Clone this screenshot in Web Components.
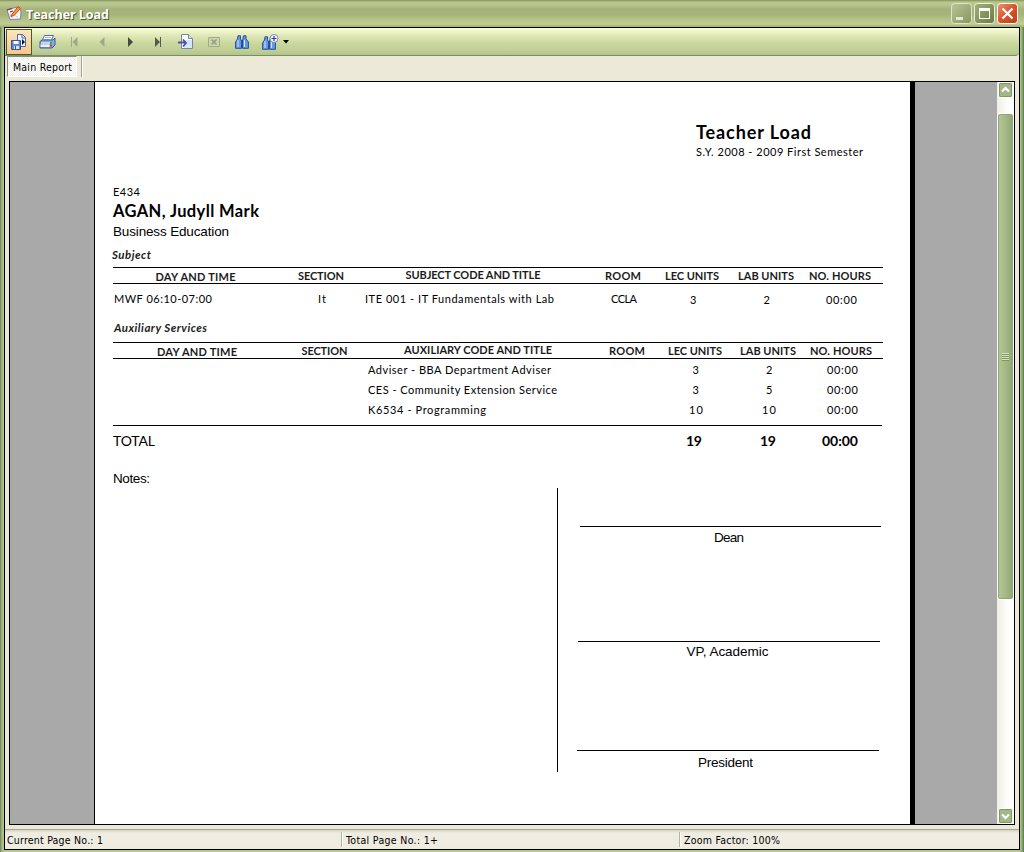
<!DOCTYPE html>
<html lang="en">
<head>
<meta charset="utf-8">
<title>Teacher Load</title>
<style>
html,body{margin:0;height:100%;overflow:hidden}
body{font-family:"Liberation Sans",Arial,sans-serif;color:#000}
</style>
</head>
<body>
<app-window></app-window>
<script>
function define(name, html, init){
  customElements.define(name, class extends HTMLElement{
    connectedCallback(){
      if(this.shadowRoot) return;
      this.attachShadow({mode:'open'}).innerHTML = html;
      if(init) init.call(this);
    }
  });
}

/* Tracks its text so that it fills the width given in "w". */
define('fit-text', `<style>
:host{display:inline-block;white-space:pre;flex:none}
:host([f=c]){font-family:Lato,"Open Sans",sans-serif;font-size:11px;color:#000}
:host([f=b]){font-family:Lato,"Open Sans",sans-serif;font-size:11px;font-weight:700;color:#1c1c1c}
:host([f=i]){font-family:Lato,"Open Sans",sans-serif;font-size:11.5px;font-weight:700;font-style:italic;color:#1c1c1c}
:host([f=t]){font-family:"DejaVu Sans Condensed","DejaVu Sans",sans-serif;font-size:10.5px}
:host([f=a]){font-family:"Liberation Sans",Arial,sans-serif;font-size:13.5px}
</style><span><slot></slot></span>`, function(){
  const w = +this.getAttribute('w'), s = this.shadowRoot.querySelector('span');
  const n = this.textContent.length;
  if(n > 1) s.style.letterSpacing = ((w - s.getBoundingClientRect().width)/(n-1)) + 'px';
  this.style.width = w + 'px';
});

define('title-bar', `<style>
:host{display:flex;height:27px;align-items:center;box-sizing:border-box;padding:0 6px 0 6px;
background:linear-gradient(#7f9257 0,#b9c78f 2px,#b7c48c 5px,#a5b37a 9px,#a7b57b 15px,#b6c489 20px,#bfcc93 24px,#9fae72 27px)}
svg{display:block}
.i{margin:-2px 4px 0 0}
fit-text{font:700 12.5px "Open Sans",sans-serif;color:#fff;text-shadow:1px 1px 0 #4d5930;flex:none;margin-top:2px}
.g{flex:1}
.b{display:flex;gap:2px}
</style>
<svg class="i" width="16" height="16"><path d="M1 5l3 9.500 10.500-.5.5-8-4-4z" fill="#f4f4fb" stroke="#7f82aa"/><path d="M3.500 9l2.500 4M6 9l6 3" stroke="#c4c6df" fill="none"/><path d="M5.500 10L12 1.500l2.500 2L8 10.500l-3 1z" fill="#f59a2c" stroke="#c4481a"/><path d="M1 5l5-1.500M4 7l3-1" stroke="#8a2a18" stroke-width="1.300"/></svg>
<fit-text w="83">Teacher Load</fit-text><span class="g"></span>
<div class="b">
<svg width="21" height="21"><defs><linearGradient id="m1" x2="1" y2="1"><stop stop-color="#b9c597"/><stop offset="1" stop-color="#869660"/></linearGradient></defs><rect x=".5" y=".5" width="20" height="20" rx="3" fill="url(#m1)" stroke="#dfe6c8"/><path d="M5 14h7v3H5z" fill="#e3e9cc"/></svg>
<svg width="21" height="21"><defs><linearGradient id="m2" x2="1" y2="1"><stop stop-color="#a2b17b"/><stop offset="1" stop-color="#6b7c42"/></linearGradient></defs><rect x=".5" y=".5" width="20" height="20" rx="3" fill="url(#m2)" stroke="#edf1dc"/><path d="M5 5h11v11H5zM6 8v7h9V8z" fill="#fff" fill-rule="evenodd"/></svg>
<svg width="21" height="21"><defs><linearGradient id="m3" x2="1" y2="1"><stop stop-color="#eb9474"/><stop offset=".5" stop-color="#d8532b"/><stop offset="1" stop-color="#b93f17"/></linearGradient></defs><rect x=".5" y=".5" width="20" height="20" rx="3" fill="url(#m3)" stroke="#fff"/><path d="M5.500 5.500l10 10M15.500 5.500l-10 10" stroke="#fff" stroke-width="2.300"/></svg>
</div>`);

define('tool-bar', `<style>
:host{display:flex;height:28px;box-sizing:border-box;align-items:center;border-bottom:1px solid #74905f;border-radius:0 0 4px 0;
background:linear-gradient(#fbffe2 0,#eff5cb 3px,#dbe5b3 9px,#c9d69d 16px,#c0cf98 22px,#b3c48b 27px)}
span{display:flex;align-items:center;justify-content:center;width:28px;height:26px;flex:none}
.on{width:26px;box-sizing:border-box;border:1px solid #3f5d2e;margin:0 1px;background:linear-gradient(#fde5bd,#fdc68a)}
.on+span{margin-right:-1px}
.dd{width:10px;margin-left:-3px}
</style>
<span class="on"><svg width="16" height="16"><path d="M6.500.5h5l3 3v9h-8z" fill="#eef4ff" stroke="#4a66a6"/><path d="M11 .5v3.500h3.500" fill="none" stroke="#4a66a6"/><path d="M11 5l3 3-3 3z" fill="#111"/><path d="M.5 6.500h9v9h-9z" fill="#5d87cd" stroke="#34569c"/><path d="M2.500 7h5v3h-5z" fill="#fff"/><path d="M3 12h5v3H3z" fill="#d9e5f7"/><path d="M4 12h1v3H4z" fill="#34569c"/></svg></span>
<span><svg width="17" height="14"><path d="M5.500.5h9L12 6H3z" fill="#fff" stroke="#4f68ad"/><path d="M6 2.500h6M5 4.500h6" stroke="#a5b8e0"/><path d="M1 6.500L3 5h11l2-2v7l-3 3H1z" fill="#8eaae0" stroke="#3b55a2"/><path d="M2 8h9" stroke="#fff"/><path d="M1.500 9.500h9v2.500h-9z" fill="#edf2fb"/><path d="M11 7h2v2h-2z" fill="#29b53b"/><path d="M11 9.500h2v2h-2z" fill="#d83a23"/></svg></span>
<span><svg width="8" height="10"><path d="M1 0h1v10H1zM7.500 0v10L2.500 5z" fill="#a0a98b"/></svg></span>
<span><svg width="8" height="10"><path d="M6.500 0v10L1.500 5z" fill="#a0a98b"/></svg></span>
<span><svg width="8" height="10"><path d="M2 0v10l5-5z" fill="#454a3e"/></svg></span>
<span><svg width="8" height="10"><path d="M1 0v10l5-5zM6 0h1v10H6z" fill="#555b4e"/></svg></span>
<span><svg width="16" height="16"><path d="M3.500.5h7l4 4v10h-11z" fill="#fbfdff" stroke="#7c86a0"/><path d="M6 6h8v8H6z" fill="#d3e8fa"/><path d="M10.500.5v4h4" fill="#e2e6ee" stroke="#7c86a0"/><path d="M0 8.500h7M5 5.500l3 3.500-3 3.500" fill="none" stroke="#4c51a8" stroke-width="1.800"/></svg></span>
<span><svg width="12" height="10"><path d="M.5.5h11v9H.5z" fill="#ccd6ac" stroke="#a3ac89"/><path d="M3.500 2.500l5 5M8.500 2.500l-5 5" stroke="#929b7b" stroke-width="1.500"/></svg></span>
<span><svg width="14" height="14"><g fill="#6a9ade" stroke="#234f9d"><path d="M3 .8h2.500v3L6.500 6v7.300H.6V7L2.500 4z"/><path d="M8.500.8H11v3L13.400 7v6.300H7.500V6z"/></g><path d="M6 5h2v3H6z" fill="#234f9d"/><path d="M3 5v7M9.500 5v7" stroke="#cfe4fb"/></svg></span>
<span><svg width="17" height="16"><g transform="translate(0 2)"><g fill="#6a9ade" stroke="#234f9d"><path d="M3 .8h2.500v3L6.500 6v7.300H.6V7L2.500 4z"/><path d="M8.500.8H11v3L13.400 7v6.300H7.500V6z"/></g><path d="M6 5h2v3H6z" fill="#234f9d"/><path d="M3 5v7M9.500 6v6" stroke="#cfe4fb"/></g><circle cx="12" cy="4.500" r="4" fill="#f6f8ff" stroke="#8089b0"/><path d="M9.500 4.500h5M12 2v5" stroke="#2f3d94" stroke-width="1.200"/></svg></span>
<span class="dd"><svg width="6" height="4"><path d="M0 0h6L3 3.500z" fill="#000"/></svg></span>`);

define('tab-strip', `<style>
:host{display:flex;height:25px;align-items:flex-start;padding-left:2px}
.t{box-sizing:border-box;width:70px;height:21px;border:1px solid;border-color:#8d8b7c #fff #fff #8d8b7c;padding:1px 0 0 5px;line-height:15px;
background:repeating-conic-gradient(#fff 0 25%,#f1efe6 0 50%) 0 0/2px 2px}
.d{width:1px;height:21px;background:#a5a291;margin-left:4px;border-right:1px solid #fff}
</style><div class="t"><fit-text f="t" w="59">Main Report</fit-text></div><div class="d"></div>`);

define('scroll-bar', `<style>
:host{display:flex;flex-direction:column;width:17px;background:linear-gradient(90deg,#efeee8,#fdfdf9 60%,#fff)}
.b{height:16px;padding:0 0 0 1px}
.th{box-sizing:border-box;margin:16px 1px 0;height:485px;border:1px solid #8ea86f;border-radius:2px;background:linear-gradient(90deg,#b3c596,#a2b685 60%,#8fa772);
display:flex;flex-direction:column;align-items:center;justify-content:center;box-shadow:0 0 0 1px #fff}
.th i{width:7px;height:1px;background:#d8e3c3;border-bottom:1px solid #80975f}
.s{flex:1}
svg{display:block}
</style>
<div class="b"><svg width="15" height="16"><rect x=".5" y=".5" width="14" height="15" rx="2" fill="#9bb07b" stroke="#fff"/><rect x="1.500" y="1.500" width="12" height="13" rx="1" fill="#a4b786" stroke="#7f9963"/><path d="M4 9.500L7.500 6 11 9.500" fill="none" stroke="#fff" stroke-width="2.200"/></svg></div>
<div class="th"><i></i><i></i><i></i><i></i></div><div class="s"></div>
<div class="b"><svg width="15" height="16"><rect x=".5" y=".5" width="14" height="15" rx="2" fill="#9bb07b" stroke="#fff"/><rect x="1.500" y="1.500" width="12" height="13" rx="1" fill="#a4b786" stroke="#7f9963"/><path d="M4 6.500L7.500 10 11 6.500" fill="none" stroke="#fff" stroke-width="2.200"/></svg></div>`);

const cols = labels => labels.map(([t,w,up]) => `<div${up?` class="${up}"`:''}><fit-text f="b" w="${w}">${t}</fit-text></div>`).join('');
define('report-table', `<style>
:host{display:block;width:770px}
.h{display:grid;grid-template-columns:var(--cols);justify-items:center;height:15px;line-height:14px;border:1px solid #000;border-width:1px 0}
.up{margin-top:-1px}
.dn{margin-top:1px}
::slotted(*){display:grid;grid-template-columns:var(--cols);justify-items:center}
</style><div class="h"></div><slot></slot>`, function(){
  this.shadowRoot.querySelector('.h').innerHTML = cols([['DAY AND TIME',80,'dn'],['SECTION',46],
    this.hasAttribute('aux') ? ['AUXILIARY CODE AND TITLE',148,'up'] : ['SUBJECT CODE AND TITLE',135,'up'],
    ['ROOM',36],['LEC UNITS',54],['LAB UNITS',56],['NO. HOURS',62]]);
});

define('sign-line', `<style>
:host{display:flex;flex-direction:column;align-items:center;width:301px;border-top:1px solid #000;line-height:16px;padding:3px 3px 0 0;box-sizing:border-box}
</style><slot></slot>`);

const line = (y, m, html) => `<div class="l" style="height:${y}px;padding-left:${m}px">${html}</div>`;
define('report-page', `<style>
:host{display:block;box-sizing:border-box;width:821px;border-left:1px solid #000;border-right:5px solid #000;background:#fff;overflow:hidden}
.l{line-height:20px;box-sizing:border-box;white-space:nowrap}
.hd{padding-top:40px;height:99px;box-sizing:border-box}
.big{font:700 18px/20px Lato,sans-serif;color:#000}
.nm{font:700 16.500px/20px Lato,sans-serif;color:#000}
.a,.x{margin-left:18px}
.a{--cols:165px 86px 218px 82px 56px 92px 56px}
.x{--cols:168px 87px 220px 78px 58px 88px 58px}
.r{line-height:20px;height:20px;box-sizing:border-box}
.r>:nth-child(3){justify-self:start}
.r .f{justify-self:start;margin-left:1px}
.o{margin-left:2px}
.p{margin-left:3px}
.tot{display:grid;grid-template-columns:165px 386px 60px 88px 56px;justify-items:center;margin-left:18px;width:769px;border-top:1px solid #000;line-height:30px;height:46px;box-sizing:border-box}
.tot>:first-child{justify-self:start;font-size:14px}
.tot>:not(:first-child){font-size:14px;color:#000}
.bt{display:flex;margin-left:18px}
.n{width:444px;height:304px;line-height:13px}
.bar{width:1px;background:#000;margin-top:17px;height:284px}
.sg{padding:55px 0 0 22px}
.sg sign-line{height:115px}
.sg sign-line+sign-line{margin-left:-2px;height:109px;width:302px;padding-top:2px}
.sg sign-line+sign-line+sign-line{margin-left:-3px;height:40px;padding:4px 5px 0 0}
</style>
<div class="hd">
${line(19,601,'<fit-text class="big" w="115">Teacher Load</fit-text>')}
${line(20,601,'<fit-text f="c" w="167">S.Y. 2008 - 2009 First Semester</fit-text>')}
</div>
${line(20,18,'<fit-text f="c" w="27">E434</fit-text>')}
${line(20,18,'<fit-text class="nm" w="146">AGAN, Judyll Mark</fit-text>')}
${line(23,18,'<fit-text f="a" w="116">Business Education</fit-text>')}
${line(23,17,'<fit-text f="i" w="39">Subject</fit-text>')}
<report-table class="a"><div class="r" style="padding-top:5px;height:29px"><fit-text class="f" f="c" w="98">MWF 06:10-07:00</fit-text><fit-text class="o" f="c" w="8">It</fit-text><fit-text style="margin-left:1px" f="c" w="189">ITE 001 - IT Fundamentals with Lab</fit-text><fit-text class="o" f="c" w="26">CCLA</fit-text><fit-text class="p" style="margin-top:1px" f="c" w="7">3</fit-text><fit-text class="o" style="margin-top:1px" f="c" w="7">2</fit-text><fit-text class="p" style="margin-top:1px" f="c" w="31">00:00</fit-text></div></report-table>
${line(29,19,'<fit-text f="i" w="93" style="margin-top:5px">Auxiliary Services</fit-text>')}
<report-table class="x" aux>
<div class="r" style="height:21px;padding-top:1px"><span></span><span></span><fit-text f="c" w="183">Adviser - BBA Department Adviser</fit-text><span></span><fit-text class="o" f="c" w="7">3</fit-text><fit-text class="p" f="c" w="7">2</fit-text><fit-text class="p" f="c" w="31">00:00</fit-text></div>
<div class="r"><span></span><span></span><fit-text f="c" w="189">CES - Community Extension Service</fit-text><span></span><fit-text class="o" f="c" w="7">3</fit-text><fit-text class="p" f="c" w="7">5</fit-text><fit-text class="p" f="c" w="31">00:00</fit-text></div>
<div class="r" style="height:25px"><span></span><span></span><fit-text f="c" w="118">K6534 - Programming</fit-text><span></span><fit-text class="o" f="c" w="14">10</fit-text><fit-text class="o" f="c" w="14">10</fit-text><fit-text class="p" f="c" w="31">00:00</fit-text></div>
</report-table>
<div class="tot"><fit-text f="c" w="42">TOTAL</fit-text><span></span><fit-text f="b" w="16">19</fit-text><fit-text f="b" w="16">19</fit-text><fit-text f="b" w="36">00:00</fit-text></div>
<div class="bt"><div class="n"><fit-text f="a" w="37">Notes:</fit-text></div><div class="bar"></div>
<div class="sg"><sign-line><fit-text f="a" w="30">Dean</fit-text></sign-line><sign-line><fit-text f="a" w="82">VP, Academic</fit-text></sign-line><sign-line><fit-text f="a" w="55">President</fit-text></sign-line></div></div>`);

define('status-bar', `<style>
:host{display:grid;grid-template-columns:336px 338px 1fr;height:20px;box-sizing:border-box;border-top:1px solid #a9a796;line-height:18px;background:linear-gradient(#d6d3c4 0,#efede2 3px,#efebe0)}
div{padding-left:2px}
div+div{padding-left:4px;margin-top:2px;line-height:14px;height:15px;border-left:1px solid #b5b2a2;box-shadow:inset 1px 0 #fff}
</style><div><fit-text f="t" w="96">Current Page No.: 1</fit-text></div><div><fit-text f="t" w="92">Total Page No.: 1+</fit-text></div><div><fit-text f="t" w="96">Zoom Factor: 100%</fit-text></div>`);

define('app-window', `<style>
:host{display:flex;flex-direction:column;width:1024px;height:852px;box-sizing:border-box;background:linear-gradient(90deg,#66855a 0,#a4b881 2px,#b7c68d 4px,#b7c68d 1020px,#8fab75 1022px,#527748 1024px)}
.in{box-sizing:border-box;margin:0 4px;width:1016px;height:823px;border:1px solid #000;background:#ece9d8;display:flex;flex-direction:column}
.v{box-sizing:border-box;margin:0 4px;height:744px;width:1006px;border:1px solid #000;display:flex;background:#a9a9a9}
report-page{margin-left:84px}
scroll-bar{margin-left:auto}
.s{flex:1}
</style>
<title-bar></title-bar><div class="in"><tool-bar></tool-bar><tab-strip></tab-strip><div class="v"><report-page></report-page><scroll-bar></scroll-bar></div><div class="s"></div><status-bar></status-bar></div>`);
</script>
</body>
</html>
